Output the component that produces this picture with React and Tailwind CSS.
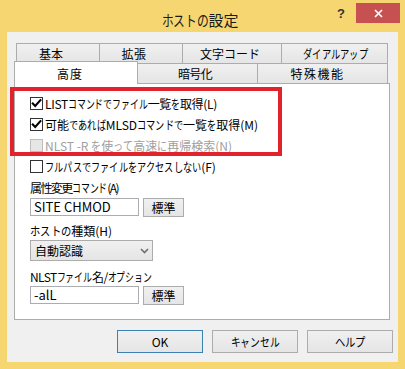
import React, { useLayoutEffect, useRef } from "react";

const FONT = "font-['Noto_Sans_CJK_JP',sans-serif] [font-feature-settings:'palt']";
const KANA = /[\u3040-\u30ff]/;

// Text fitted to the width it has in the reference (Meiryo UI draws narrow kana):
// kana glyphs are narrowed by a factor computed at run time (clamped), any rest goes to letter-spacing.
function T({ w, children, className = "" }) {
  const ref = useRef(null);
  const s = String(children);
  const chars = Array.from(s);
  const kana = chars.filter((c) => KANA.test(c)).length;
  const other = chars.length - kana;

  useLayoutEffect(() => {
    if (w == null) return;
    const measure = () => {
      const el = ref.current;
      if (!el) return;
      el.style.removeProperty("--kw");
      el.style.removeProperty("--sc");
      el.style.removeProperty("--k");
      const cur = el.getBoundingClientRect().width;
      const fs = parseFloat(getComputedStyle(el).fontSize);
      if (kana) {
        const non = cur - kana * fs;
        let kw = (w - non) / kana;
        if (other > 0) kw = Math.min(fs, Math.max(0.74 * fs, kw));
        const rest = w - non - kana * kw;
        el.style.setProperty("--kw", `${kw}px`);
        el.style.setProperty("--sc", String(kw / fs));
        if (other > 0) el.style.setProperty("--k", `${rest / other}px`);
      } else {
        el.style.setProperty("--k", `${(w - cur) / chars.length}px`);
      }
    };
    measure();
    if (document.fonts && document.fonts.ready) document.fonts.ready.then(measure);
  }, [w, s]);

  const parts = s.split(/([\u3040-\u30ff]+)/).filter((p) => p.length);
  return (
    <span ref={ref} className={`inline-block whitespace-nowrap ${className}`}>
      {parts.map((p, i) =>
        KANA.test(p) ? (
          Array.from(p).map((c, j) => (
            <span key={`${i}-${j}`} className="inline-block w-[var(--kw,1em)] [font-feature-settings:normal]">
              <span className="inline-block origin-left [transform:scaleX(var(--sc,1))]">{c}</span>
            </span>
          ))
        ) : (
          <span key={i} className="tracking-[var(--k,0px)]">{p}</span>
        )
      )}
    </span>
  );
}

function Check({ checked, disabled }) {
  if (disabled) {
    return <span className="block w-[13px] h-[13px] border border-[#BCBCBC] bg-[#E6E6E6] shrink-0" />;
  }
  return (
    <span className="flex w-[13px] h-[13px] border border-[#333333] bg-white items-center justify-center shrink-0">
      {checked && (
        <svg width="11" height="11" viewBox="0 0 11 11">
          <path d="M1.8 5.6 L4.2 8 L9.4 2.2" stroke="#000" strokeWidth="2.1" fill="none" strokeLinecap="square" />
        </svg>
      )}
    </span>
  );
}

function Row({ checked, disabled, w, children }) {
  return (
    <div className="flex items-center h-[21px] gap-[2px]">
      <Check checked={checked} disabled={disabled} />
      <T w={w} className={disabled ? "text-[12px] leading-[17px] text-[#A0A0A0]" : "text-[12px] leading-[17px] text-black"}>
        {children}
      </T>
    </div>
  );
}

function StdButton() {
  return (
    <div className="w-[41px] h-[19px] border border-[#ACACAC] bg-linear-to-b from-[#F0F0F0] to-[#E5E5E5] flex items-center justify-center text-[12px] leading-[17px]">
      標準
    </div>
  );
}

function Tab({ w, tw, children, className = "" }) {
  return (
    <div
      className={`h-full border border-b-0 border-[#ACACAC] -ml-[1px] first:ml-0 bg-linear-to-b from-[#F0F0F0] to-[#E5E5E5] flex items-center justify-center text-[12px] leading-[17px] ${className}`}
      style={{ width: w }}
    >
      <T w={tw}>{children}</T>
    </div>
  );
}

export default function App() {
  return (
    <div className={`relative w-[405px] h-[369px] bg-[#F6D670] flex flex-col text-black ${FONT}`}>
      {/* title bar */}
      <div className="h-[32px] flex shrink-0">
        <div className="flex-1" />
        <div className="pt-[10px] text-[15px] leading-[20px] text-[#1a1a1a]">
          <T w={77}>ホストの設定</T>
        </div>
        <div className="flex-1 flex justify-end items-start pr-[5px] pt-[3px]">
          <span className="mt-[4px] mr-[11px] text-[13px] leading-[14px] font-bold text-[#333] font-['Liberation_Sans',sans-serif]">?</span>
          <div className="w-[44px] h-[20px] bg-[#C75050] flex items-center justify-center">
            <svg width="9" height="9" viewBox="0 0 9 9">
              <path d="M1 1 L8 8 M8 1 L1 8" stroke="#fff" strokeWidth="1.6" />
            </svg>
          </div>
        </div>
      </div>

      {/* client area */}
      <div className="flex-1 mx-[7px] mb-[7px] bg-[#F0F0F0] flex flex-col">
        <div className="ml-[7px] mr-[8px] mt-[11px] flex flex-col">
          {/* tab row 1 */}
          <div className="h-[20px] flex px-[2px]">
            <Tab w={84} tw={24} className="pr-[14px]">基本</Tab>
            <Tab w={84} tw={25} className="pr-[14px]">拡張</Tab>
            <Tab w={100} tw={60} className="pr-[4px]">文字コード</Tab>
            <Tab w={107} tw={65} className="pl-[2px]">ダイアルアップ</Tab>
          </div>
          {/* tab row 2 */}
          <div className="h-[20px] flex px-[2px] items-end">
            <div className="relative z-10 w-[124px] h-[23px] -ml-[2px] -mr-[2px] -mb-[1px] border border-b-0 border-[#ACACAC] bg-white flex items-center justify-center text-[12px] leading-[17px] pr-[12px]">
              <T w={26}>高度</T>
            </div>
            <Tab w={123} tw={34} className="pr-[3px]">暗号化</Tab>
            <Tab w={131} tw={54} className="pr-[10px]">特殊機能</Tab>
          </div>
          {/* panel */}
          <div className="h-[237px] border border-[#ACACAC] bg-white pl-[15px] pt-[9px] flex flex-col">
            <Row checked w={172}>LISTコマンドでファイル一覧を取得(L)</Row>
            <Row checked w={213}>可能であればMLSDコマンドで一覧を取得(M)</Row>
            <Row disabled w={187}>NLST -R を使って高速に再帰検索(N)</Row>
            <Row w={171}>フルパスでファイルをアクセスしない(F)</Row>

            <div className="h-[17px] mt-[2px] text-[12px] leading-[17px]"><T w={88}>属性変更コマンド(A)</T></div>
            <div className="flex items-start gap-[4px] mt-[2px]">
              <div className="w-[109px] h-[18px] border border-[#ABADB3] bg-white pl-[3px] text-[13px] leading-[16px] whitespace-nowrap">SITE CHMOD</div>
              <StdButton />
            </div>

            <div className="h-[17px] mt-[5px] text-[12px] leading-[17px]"><T w={82}>ホストの種類(H)</T></div>
            <div className="mt-[1px] w-[123px] h-[21px] border border-[#ACACAC] bg-linear-to-b from-[#F0F0F0] to-[#E5E5E5] flex items-center justify-between pl-[4px] pr-[3px]">
              <span className="text-[12px] leading-[17px]">自動認識</span>
              <svg width="9" height="6" viewBox="0 0 9 6">
                <path d="M1 1 L4.5 4.5 L8 1" stroke="#707070" strokeWidth="1.6" fill="none" />
              </svg>
            </div>

            <div className="h-[17px] mt-[7px] text-[12px] leading-[17px]"><T w={122}>NLSTファイル名/オプション</T></div>
            <div className="flex items-start gap-[4px] mt-[1px]">
              <div className="w-[109px] h-[18px] border border-[#ABADB3] bg-white pl-[3px] text-[13px] leading-[16px]">-alL</div>
              <StdButton />
            </div>
          </div>
        </div>

        {/* dialog buttons */}
        <div className="flex justify-end gap-[9px] pr-[5px] mt-[10px]">
          <div className="w-[86px] h-[23px] border border-[#3C7FB1] bg-linear-to-b from-[#F0F0F0] to-[#E5E5E5] flex items-center justify-center text-[12px]">OK</div>
          <div className="w-[86px] h-[23px] border border-[#ACACAC] bg-linear-to-b from-[#F0F0F0] to-[#E5E5E5] flex items-center justify-center text-[12px]"><T w={49}>キャンセル</T></div>
          <div className="w-[86px] h-[23px] border border-[#ACACAC] bg-linear-to-b from-[#F0F0F0] to-[#E5E5E5] flex items-center justify-center text-[12px]"><T w={31}>ヘルプ</T></div>
        </div>
      </div>

      {/* red annotation box */}
      <div className="absolute left-[10px] top-[87px] w-[272px] h-[69px] border-4 border-[#E1242C] pointer-events-none" />
    </div>
  );
}
